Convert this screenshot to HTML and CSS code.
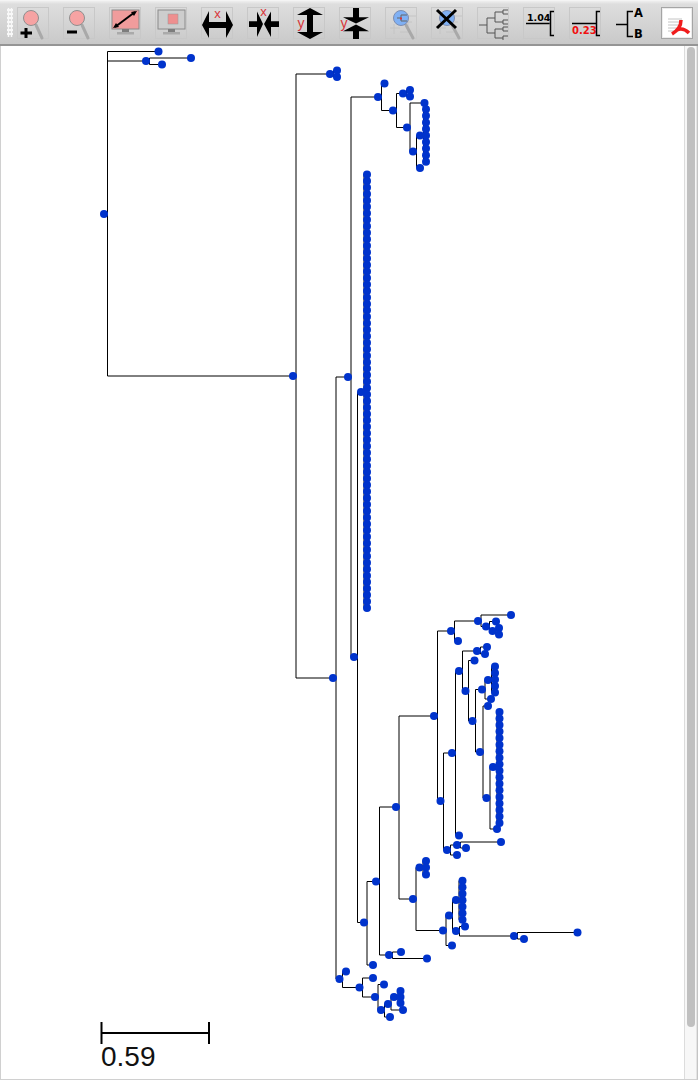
FILE: index.html
```html
<!DOCTYPE html>
<html lang="en">
<head>
  <meta charset="UTF-8">
  <title>Tree viewer</title>
  <link rel="stylesheet" href="styles.css">
</head>
<body>
  <div class="toolbar">
    <div class="grip"></div>

    <div class="tool">
      <svg viewBox="0 0 30 30"><line class="handle" x1="18" y1="17" x2="24" y2="30"/><circle class="lens-pink" cx="13" cy="10" r="7.500"/><path class="ink" d="M2.500 25H14M8 20V30"/></svg>
    </div>
    <div class="tool">
      <svg viewBox="0 0 30 30"><line class="handle" x1="18" y1="17" x2="24" y2="30"/><circle class="lens-pink" cx="13" cy="10" r="7.500"/><path class="ink" d="M3 24H13"/></svg>
    </div>
    <div class="tool">
      <svg viewBox="0 0 30 30"><rect class="screen" x="2" y="2" width="27" height="19"/><rect class="stand" x="12" y="21" width="7" height="3"/><rect class="foot" x="7" y="24" width="17" height="2.500"/><path class="arrow-line" d="M5 19L25 4"/><path d="M27 3L21 4L24 8ZM3 20L9 19L6 15Z"/></svg>
    </div>
    <div class="tool">
      <svg viewBox="0 0 30 30"><rect class="screen-gray" x="2" y="2" width="27" height="19"/><rect class="red-box" x="12" y="6" width="10" height="10"/><rect class="stand" x="12" y="21" width="7" height="3"/><rect class="foot" x="7" y="24" width="17" height="2.500"/></svg>
    </div>
    <div class="tool">
      <svg viewBox="0 0 30 30"><polygon points="0,17 7,3 7,14 24,14 24,3 31,17 24,30 24,20 7,20 7,30"/><text class="axis" x="15.500" y="10">x</text></svg>
    </div>
    <div class="tool">
      <svg viewBox="0 0 30 30"><polygon points="1,13.300 9,13.300 9,3.500 15,16 9,29 9,19 1,19"/><polygon points="31,13.300 23,13.300 23,3.500 16,16 23,29 23,19 31,19"/><text class="axis" x="15.500" y="8">x</text></svg>
    </div>
    <div class="tool">
      <svg viewBox="0 0 30 30"><polygon points="16,0 29,7 19,7 19,24 29,24 16,31 3,24 13,24 13,7 3,7"/><text class="axis axis-y" x="7" y="20">y</text></svg>
    </div>
    <div class="tool">
      <svg viewBox="0 0 30 30"><polygon points="13,0 19,0 19,9.300 29,9.300 16,15.500 3,9.300 13,9.300"/><polygon points="13,31 19,31 19,23.300 29,23.300 16,16.500 3,23.300 13,23.300"/><text class="axis axis-y" x="4" y="20">y</text></svg>
    </div>
    <div class="tool">
      <svg viewBox="0 0 30 30"><path class="faint" d="M4 20H14M8 16V26M14 24H22M14 14H26M22 8H30M22 8V20"/><line class="handle" x1="20" y1="17" x2="27" y2="30"/><circle class="lens-blue" cx="15" cy="10" r="7.500"/><path class="mini" d="M11 10H15M15 7H21M15 7V13H21"/><rect class="dot-red" x="14" y="9.500" width="2" height="2"/></svg>
    </div>
    <div class="tool">
      <svg viewBox="0 0 30 30"><path class="faint" d="M4 20H14M8 16V26M14 24H22M14 14H26M22 8H30"/><line class="handle" x1="20" y1="17" x2="27" y2="30"/><circle class="lens-blue" cx="15" cy="10" r="7.500"/><path class="cross" d="M5 2L24 20M24 2L5 20"/></svg>
    </div>
    <div class="tool">
      <svg viewBox="0 0 30 30"><path class="tree-lines" d="M1 17H9M9 10V25M9 10H17M9 25H17M17 4V14M17 21V30M17 4H25M17 14H25M17 21H25M17 30H25M25 2V6M25 12V16M25 19V23M25 28V32M25 2H30M25 6H30M25 12H30M25 16H30M25 19H30M25 23H30M25 28H30"/></svg>
    </div>
    <div class="tool">
      <svg viewBox="0 0 30 30"><text class="length-black" x="3" y="13">1.04</text><path class="bracket" d="M2 15.500H25.500M30 3.500H26.500V27.500H30"/></svg>
    </div>
    <div class="tool">
      <svg viewBox="0 0 30 30"><text class="length-red" x="2" y="26">0.23</text><path class="bracket" d="M2 15.500H26.500M30 3.500H26.500V27.500H30"/></svg>
    </div>
    <div class="tool tool-plain">
      <svg viewBox="0 0 30 30"><path class="bracket" d="M0 16.500H11.500M17 3.500H11.500V28.500H17"/><text class="leaf-label" x="18" y="9">A</text><text class="leaf-label" x="18" y="30">B</text></svg>
    </div>
    <div class="tool tool-raised">
      <svg viewBox="0 0 30 30"><path class="faint" d="M6 11H20M6 14H20M6 17H20M6 20H16M6 23H14"/><path class="acrobat" d="M19 12C19 18 15 23 10 26M15 22C19 20 23 21 27 25"/></svg>
    </div>
  </div>

  <div class="plot">
    <svg class="canvas" viewBox="0 46 684 1032">
      <g id="branches"></g>
      <g id="nodes"></g>
      <path class="scale" d="M101.500 1022V1044M209 1022V1044M101.500 1033H209"/>
      <text class="scale-label" x="101" y="1066">0.59</text>
    </svg>
    <div class="scrollbar"><div class="thumb"></div></div>
  </div>

  <script src="script.js"></script>
</body>
</html>
```

FILE: styles.css
```css
html, body {
  margin: 0;
  height: 100%;
  overflow: hidden;
  background: #fff;
}

body {
  display: flex;
  flex-direction: column;
  height: 1080px;
}

.toolbar {
  display: flex;
  gap: 14px;
  padding: 6px 0 0 17px;
  box-sizing: border-box;
  position: relative;
  background: linear-gradient(#efefef 0, #dedede 3px, #c9c9c9 100%);
  border-top: 1px solid #f4f4f4;
  border-bottom: 2px solid #959595;
  flex: none;
  height: 46px;
}

.grip {
  position: absolute;
  left: 7px;
  top: 7px;
  width: 6px;
  height: 29px;
  background-image: radial-gradient(#f8f8f8 1.2px, transparent 1.6px);
  background-size: 3px 4px;
}

.tool {
  width: 30px;
  height: 30px;
  flex: none;
  border: 1px solid #c8c8c8;
}

.tool svg {
  display: block;
  width: 30px;
  height: 30px;
  overflow: visible;
}

.tool-plain {
  border-color: transparent;
}

.tool-raised {
  background: #fff;
  border: 1px solid #a5a5a5;
  box-shadow: inset 0 0 0 1px #ececec;
}

.handle {
  stroke: #a9a9a9;
  stroke-width: 3;
  stroke-linecap: round;
}

.lens-pink {
  fill: #f6a3a3;
  stroke: #8f8f8f;
  stroke-width: 1;
}

.lens-blue {
  fill: #7fb0f4;
  stroke: #7d8db0;
  stroke-width: 1;
}

.ink {
  fill: none;
  stroke: #000;
  stroke-width: 3;
}

.screen {
  fill: #f09c9c;
  stroke: #8a8a8a;
}

.screen-gray {
  fill: #cdcdcd;
  stroke: #8a8a8a;
}

.red-box {
  fill: #ee8f8f;
  stroke: #999;
  stroke-width: 0.5;
}

.stand {
  fill: #7d7d7d;
}

.foot {
  fill: #aaa;
}

.arrow-line {
  fill: none;
  stroke: #000;
  stroke-width: 2;
}

.axis {
  fill: #d8353a;
  font: 13px "Liberation Sans", sans-serif;
  text-anchor: middle;
}

.axis-y {
  font-size: 14px;
}

.faint {
  fill: none;
  stroke: #c4c4c4;
  stroke-width: 1;
}

.mini {
  fill: none;
  stroke: #666;
  stroke-width: 1;
}

.dot-red {
  fill: #d8353a;
}

.cross {
  fill: none;
  stroke: #000;
  stroke-width: 3;
}

.tree-lines {
  fill: none;
  stroke: #555;
  stroke-width: 1;
}

.bracket {
  fill: none;
  stroke: #000;
  stroke-width: 1.500;
}

.length-black {
  font: bold 9.500px "DejaVu Sans", sans-serif;
  fill: #000;
}

.length-red {
  font: bold 10px "DejaVu Sans", sans-serif;
  fill: #f01010;
}

.leaf-label {
  font: bold 11.500px "DejaVu Sans", sans-serif;
  fill: #000;
}

.acrobat {
  fill: none;
  stroke: #f01c1c;
  stroke-width: 3.500;
}

.plot {
  flex: 1;
  display: flex;
  border: 1px solid #d0d0d0;
  border-top: none;
  border-right-color: #c4c4c4;
  min-height: 0;
}

.canvas {
  display: block;
  width: 684px;
  height: 1032px;
  flex: none;
  margin-left: -1px;
}

.branch {
  fill: none;
  stroke: #000;
  stroke-width: 1;
}

.node {
  fill: #0033cc;
}

.scale {
  fill: none;
  stroke: #000;
  stroke-width: 2;
}

.scale-label {
  font: 28px "Liberation Sans", sans-serif;
  fill: #111;
}

.scrollbar {
  flex: 1;
  background: #f7f7f7;
  border-left: 1px solid #dcdcdc;
  border-right: 1px solid #e4e4e4;
  padding: 1px 1px 0;
}

.thumb {
  width: 8px;
  height: 980px;
  margin: 0 auto;
  background: #c0c0c0;
  border-radius: 4px;
}
```

FILE: script.js
```javascript
// node = [x, y, xOfVertical, children]; a leaf is just [x, y]
function column(x, from, step, count) {
  const leaves = [];
  for (let i = 0; i < count; i++) {
    leaves.push([x, from + i * step]);
  }
  return leaves;
}

const tree = [104, 214, 107.5, [
  [158.5, 51.5],
  [146, 61, 149.5, [[191, 58], [162, 64.5]]],
  [293, 376, 296, [
    [330, 74, 333.5, [[337, 70.5], [337, 77]]],
    [333, 678, 336, [
      [348, 377, 351, [
        [378, 97, 381.5, [
          [384.5, 83.5],
          [393, 110.5, 396.5, [
            [403, 93.5, 406.5, [[410, 90], [410, 96.5]]],
            [407, 127.5, 410, [
              [424.5, 103],
              [413, 151.5, 416.5, [
                [420, 135.5, 423.5, column(426, 109.3, 6.55, 9)],
                [420, 168]
              ]]
            ]]
          ]]
        ]],
        [354, 657, 357.5, [
          [361, 392, 364, column(367, 174.5, 6.47, 68)],
          [364, 922.5, 367, [
            [376, 881.5, 379.5, [
              [396, 807, 399, [
                [434, 716, 437.5, [
                  [451, 631, 454.5, [
                    [478, 621, 481, [
                      [511, 615],
                      [486, 626.5, 489.5, [
                        [496, 621.5],
                        [492.5, 631, 496, [[499, 628], [499, 634.5]]]
                      ]]
                    ]],
                    [458, 641]
                  ]],
                  [440.5, 801, 443.5, [
                    [452, 753, 455.5, [
                      [459, 671, 462.5, [
                        [477, 651, 480.5, [[487, 647], [485, 654]]],
                        [465.5, 691, 468.5, [
                          [474.5, 660.5],
                          [472.5, 721, 475.5, [
                            [482, 689.5, 485, [
                              [488, 680, 491.5, column(495, 666.5, 6.5, 5)],
                              [491, 699]
                            ]],
                            [480, 752, 483, [
                              [488, 706],
                              [486.5, 798, 490, [
                                [493, 767, 497, column(499.5, 712, 6.53, 18)],
                                [497, 829]
                              ]]
                            ]]
                          ]]
                        ]]
                      ]],
                      [459, 835.5]
                    ]],
                    [447, 850, 450.5, [
                      [457, 845, 460.5, [[501, 842], [466, 848]]],
                      [457, 855]
                    ]]
                  ]]
                ]],
                [413, 899, 416, [
                  [419.5, 867.5, 423, [[426, 861], [426, 867.5], [426, 874.5]]],
                  [443, 930.5, 446, [
                    [449, 915.5, 452.5, [
                      [456, 900, 459, column(462.5, 880.7, 6.5, 7)],
                      [456, 931, 459.5, [
                        [465, 926.5],
                        [514, 936, 517.5, [[577.5, 932.5], [524, 939]]]
                      ]]
                    ]],
                    [452, 945.5]
                  ]]
                ]]
              ]],
              [389, 955, 392.5, [[401, 952], [427, 958.5]]]
            ]],
            [373, 965]
          ]]
        ]]
      ]],
      [339.5, 979, 342.5, [
        [346, 971.5],
        [359.5, 987.5, 362.5, [
          [373, 978],
          [375, 997, 378, [
            [384, 984.5],
            [381, 1010, 384.5, [
              [388, 1004, 391, [
                [394, 997, 398, [[400.5, 991], [400.5, 997], [400.5, 1003]]],
                [403, 1010]
              ]],
              [390, 1017]
            ]]
          ]]
        ]]
      ]]
    ]]
  ]]
]];

const SVG_NS = 'http://www.w3.org/2000/svg';
let branchPath = '';
const nodes = [];

function walk(node) {
  const [x, y, vx, children] = node;
  nodes.push([x, y]);
  if (!children) return;

  const ys = children.map(c => c[1]);
  branchPath += `M${vx} ${Math.min(...ys)}V${Math.max(...ys)}`;
  children.forEach(child => {
    branchPath += `M${vx} ${child[1]}H${child[0]}`;
    walk(child);
  });
}

walk(tree);

const path = document.createElementNS(SVG_NS, 'path');
path.setAttribute('class', 'branch');
path.setAttribute('d', branchPath);
document.getElementById('branches').appendChild(path);

const dots = document.getElementById('nodes');
nodes.forEach(([x, y]) => {
  const dot = document.createElementNS(SVG_NS, 'circle');
  dot.setAttribute('class', 'node');
  dot.setAttribute('cx', x);
  dot.setAttribute('cy', y);
  dot.setAttribute('r', 4);
  dots.appendChild(dot);
});
```
